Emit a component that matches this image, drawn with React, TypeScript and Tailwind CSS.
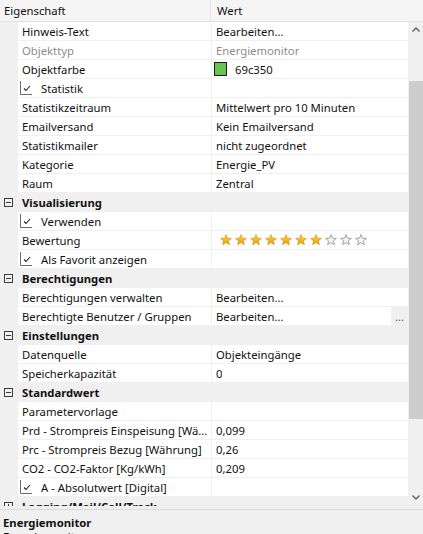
import React from 'react'

type Row =
  | { kind: 'cat'; label: string; open?: boolean }
  | { kind: 'prop'; label: string; value?: string; dim?: boolean; check?: boolean; swatch?: string; stars?: number; more?: boolean }

const rows: Row[] = [
  { kind: 'prop', label: 'Hinweis-Text', value: 'Bearbeiten...' },
  { kind: 'prop', label: 'Objekttyp', value: 'Energiemonitor', dim: true },
  { kind: 'prop', label: 'Objektfarbe', value: '69c350', swatch: '#69c350' },
  { kind: 'prop', label: 'Statistik', check: true },
  { kind: 'prop', label: 'Statistikzeitraum', value: 'Mittelwert pro 10 Minuten' },
  { kind: 'prop', label: 'Emailversand', value: 'Kein Emailversand' },
  { kind: 'prop', label: 'Statistikmailer', value: 'nicht zugeordnet' },
  { kind: 'prop', label: 'Kategorie', value: 'Energie_PV' },
  { kind: 'prop', label: 'Raum', value: 'Zentral' },
  { kind: 'cat', label: 'Visualisierung', open: true },
  { kind: 'prop', label: 'Verwenden', check: true },
  { kind: 'prop', label: 'Bewertung', stars: 7 },
  { kind: 'prop', label: 'Als Favorit anzeigen', check: true },
  { kind: 'cat', label: 'Berechtigungen', open: true },
  { kind: 'prop', label: 'Berechtigungen verwalten', value: 'Bearbeiten...' },
  { kind: 'prop', label: 'Berechtigte Benutzer / Gruppen', value: 'Bearbeiten...', more: true },
  { kind: 'cat', label: 'Einstellungen', open: true },
  { kind: 'prop', label: 'Datenquelle', value: 'Objekteingänge' },
  { kind: 'prop', label: 'Speicherkapazität', value: '0' },
  { kind: 'cat', label: 'Standardwert', open: true },
  { kind: 'prop', label: 'Parametervorlage' },
  { kind: 'prop', label: 'Prd - Strompreis Einspeisung [Wä...', value: '0,099' },
  { kind: 'prop', label: 'Prc - Strompreis Bezug [Währung]', value: '0,26' },
  { kind: 'prop', label: 'CO2 - CO2-Faktor [Kg/kWh]', value: '0,209' },
  { kind: 'prop', label: 'A - Absolutwert [Digital]', check: true },
  { kind: 'cat', label: 'Logging/Mail/Call/Track', open: false },
]

function ToggleBox({ open }: { open?: boolean }) {
  return (
    <svg width="9" height="9" viewBox="0 0 9 9" className="shrink-0">
      <rect x="0.5" y="0.5" width="8" height="8" fill="none" stroke="#3c3c3c" />
      <path d="M2 4.5H7" stroke="#3c3c3c" />
      {!open && <path d="M4.5 2V7" stroke="#3c3c3c" />}
    </svg>
  )
}

function CheckMark() {
  return (
    <svg width="13" height="14" viewBox="0 0 13 14" className="shrink-0">
      <path d="M0.5 0V13.5H12" fill="none" stroke="#6b6b6b" />
      <path d="M4 7.5L6 9.5L10 5" fill="none" stroke="#222" strokeWidth="1.1" />
    </svg>
  )
}

function Star({ filled }: { filled: boolean }) {
  const d = 'M6 0.6L7.5 4.2L11.4 4.4L8.4 6.9L9.4 10.7L6 8.6L2.6 10.7L3.6 6.9L0.6 4.4L4.5 4.2Z'
  return (
    <svg width="12" height="12" viewBox="0 0 12 12" className="shrink-0">
      <defs>
        <linearGradient id="gold" x1="0" y1="0" x2="0" y2="1">
          <stop offset="0" stopColor="#ffd84a" />
          <stop offset="1" stopColor="#e69b00" />
        </linearGradient>
      </defs>
      {filled ? (
        <path d={d} fill="url(#gold)" stroke="#d08a00" strokeWidth="0.6" />
      ) : (
        <path d={d} fill="#f4f4f4" stroke="#9a9a9a" strokeWidth="0.9" />
      )}
    </svg>
  )
}

function Chevron({ up }: { up?: boolean }) {
  return (
    <svg width="8" height="5" viewBox="0 0 8 5">
      <path d={up ? 'M0.5 4.5L4 1L7.5 4.5' : 'M0.5 0.5L4 4L7.5 0.5'} fill="none" stroke="#606060" strokeWidth="1.4" />
    </svg>
  )
}

function PropRow({ row }: { row: Extract<Row, { kind: 'prop' }> }) {
  return (
    <div className="flex h-[19px] shrink-0">
      <div className="w-[18px] shrink-0 bg-[#f0f0f0]" />
      <div className="flex w-[193px] shrink-0 items-center border-b border-[#f0f0f0] bg-white pl-[2px]">
        {row.check ? (
          <div className="flex items-center gap-[8px]">
            <CheckMark />
            <span className="whitespace-nowrap">{row.label}</span>
          </div>
        ) : (
          <span className={`whitespace-nowrap pl-[2px] ${row.dim ? 'text-[#8c8c8c]' : ''}`}>{row.label}</span>
        )}
      </div>
      <div className="flex min-w-0 flex-1 items-center border-b border-l border-[#f0f0f0] bg-white">
        {row.swatch && (
          <span className="ml-[2px] mr-[8px] h-[14px] w-[13px] shrink-0 border border-[#1e1e1e] bg-[#69c350]" />
        )}
        {row.stars !== undefined && (
          <div className="ml-[8px] flex gap-[3px]">
            {Array.from({ length: 10 }).map((_, i) => (
              <Star key={i} filled={i < row.stars!} />
            ))}
          </div>
        )}
        {row.value && (
          <span className={`truncate ${row.swatch ? '' : 'pl-[4px]'} ${row.dim ? 'text-[#8c8c8c]' : ''}`}>{row.value}</span>
        )}
        {row.more && (
          <div className="ml-auto flex h-full w-[17px] items-center justify-center bg-[#f0f0f0] text-[11px] text-[#555]">
            ...
          </div>
        )}
      </div>
    </div>
  )
}

export default function App() {
  return (
    <div className="flex h-[534px] w-[423px] flex-col overflow-hidden bg-[#f0f0f0] font-['Noto_Sans',sans-serif] text-[11.3px] leading-[19px] text-[#111]">
      <div className="flex h-[22px] shrink-0 border-b border-[#e3e3e3] bg-[#f5f5f5]">
        <div className="w-[211px] shrink-0 border-r border-[#e3e3e3] pl-[4px] leading-[22px]">Eigenschaft</div>
        <div className="pl-[6px] leading-[22px]">Wert</div>
      </div>

      <div className="flex h-[484px] shrink-0">
        <div className="flex min-w-0 flex-1 flex-col overflow-hidden">
          {rows.map((row) =>
            row.kind === 'cat' ? (
              <div key={row.label} className="flex h-[19px] shrink-0 items-center bg-[#f0f0f0] pl-[4px]">
                <ToggleBox open={row.open} />
                <span className="pl-[9px] font-bold">{row.label}</span>
              </div>
            ) : (
              <PropRow key={row.label} row={row} />
            )
          )}
        </div>
        <div className="flex w-[15px] shrink-0 flex-col bg-[#f0f0f0]">
          <div className="flex h-[15px] items-center justify-center">
            <Chevron up />
          </div>
          <div className="mt-[44px] h-[338px] w-[14px] self-end bg-[#cdcdcd]" />
          <div className="flex-1" />
          <div className="flex h-[17px] items-center justify-center">
            <Chevron />
          </div>
        </div>
      </div>

      <div className="mt-[3px] flex-1 border-t border-[#dadada] pl-[3px] pt-[6px]">
        <div className="font-bold leading-[14px]">Energiemonitor</div>
        <div className="leading-[14px]">Energiemonitor</div>
      </div>
    </div>
  )
}
